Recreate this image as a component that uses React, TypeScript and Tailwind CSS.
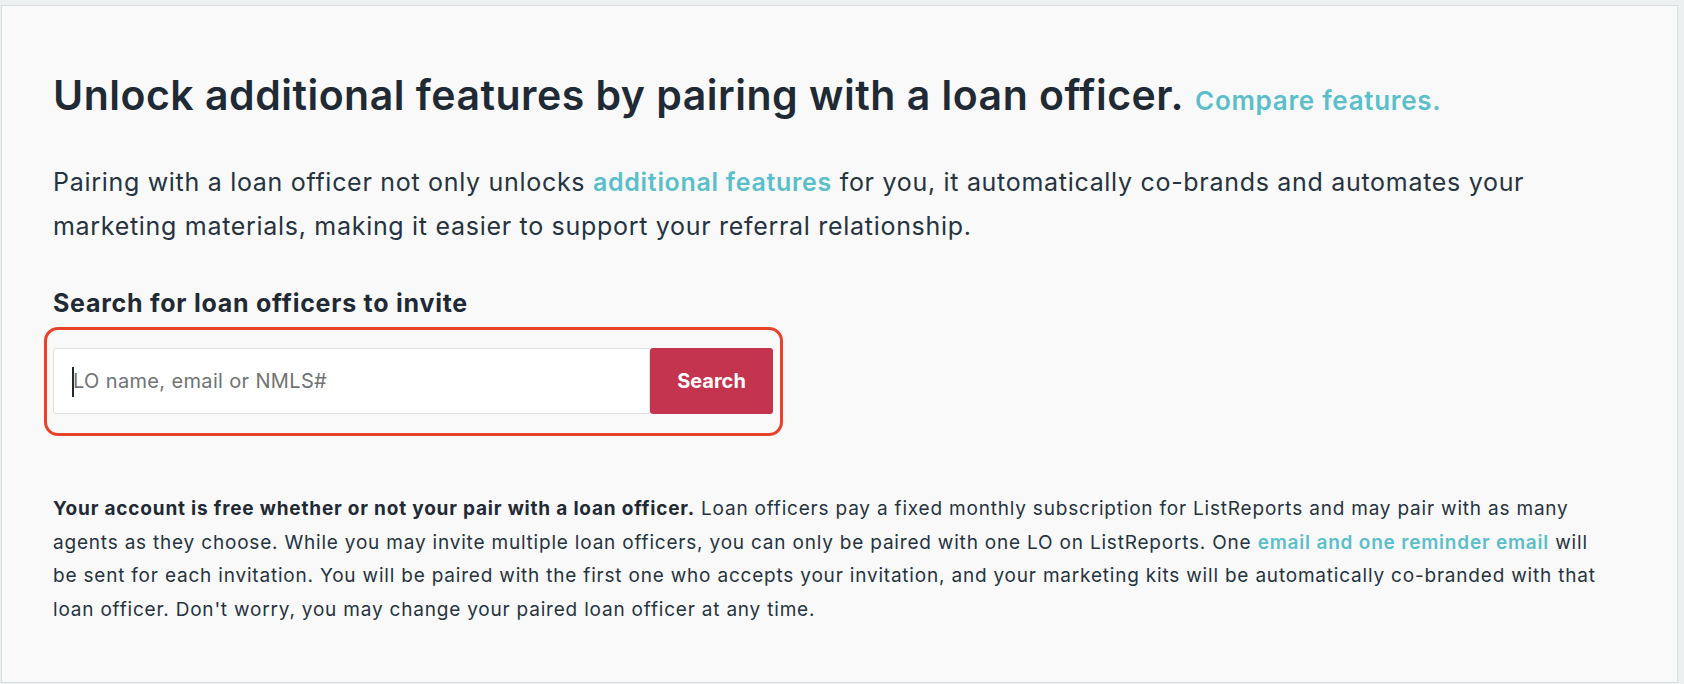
import React from "react";

const font = { fontFamily: "Inter, 'Noto Sans', sans-serif" };

const PairLoanOfficer: React.FC = () => (
  <div className="min-h-screen bg-[#edf0f1] pt-[5px]" style={font}>
    <section className="ml-px w-[1677px] min-h-[678px] border border-[#d8dde0] bg-[#f9f9f9] pl-[51px] pt-[65px] text-[#263340]">
      <h1 className="text-[41px] leading-[48px] font-semibold tracking-[0.5px] text-[#1f2a35] whitespace-nowrap">
        Unlock additional features by pairing with a loan officer.
        <a href="#" className="ml-[11px] text-[26px] font-semibold tracking-[0.7px] text-[#5bbfca]">
          Compare features.
        </a>
      </h1>

      <p className="mt-[35px] text-[25px] leading-[44px] tracking-[0.7px] whitespace-nowrap">
        Pairing with a loan officer not only unlocks{" "}
        <a href="#" className="font-semibold text-[#5bbfca]">additional features</a> for you, it
        automatically co-brands and automates your
        <br />
        marketing materials, making it easier to support your referral relationship.
      </p>

      <h2 className="mt-[40px] text-[25px] leading-[30px] font-bold tracking-[0.75px] text-[#1f2a35]">
        Search for loan officers to invite
      </h2>

      {/* search box, with the red highlight ring drawn round it */}
      <div className="relative mt-[30px] w-[720px]">
        <div className="pointer-events-none absolute -left-[9px] -right-[10px] -top-[21px] -bottom-[22px] rounded-[14px] border-[3px] border-[#e8432a]"></div>
        <div className="flex h-[66px]">
          <div className="relative flex-1 rounded-l-[3px] border border-[#dfe2e4] bg-white">
            <span className="absolute left-[18px] top-[18px] h-[30px] w-[2px] bg-[#1f2a35]"></span>
            <input
              className="h-full w-full bg-transparent pl-[19px] text-[20px] tracking-[0.35px] text-[#333] outline-none placeholder:text-[#6f7376]"
              placeholder="LO name, email or NMLS#"
            />
          </div>
          <button className="w-[123px] rounded-[3px] bg-[#c5344f] text-[20px] font-bold text-white">
            Search
          </button>
        </div>
      </div>

      <p className="mt-[78px] text-[19px] leading-[33.5px] tracking-[0.8px] whitespace-nowrap">
        <b className="font-bold text-[#1f2a35]">Your account is free whether or not your pair with a loan officer.</b>{" "}
        Loan officers pay a fixed monthly subscription for ListReports and may pair with as many
        <br />
        agents as they choose. While you may invite multiple loan officers, you can only be paired with one LO on
        ListReports. One <a href="#" className="font-semibold text-[#5bbfca]">email and one reminder email</a> will
        <br />
        be sent for each invitation. You will be paired with the first one who accepts your invitation, and your
        marketing kits will be automatically co-branded with that
        <br />
        loan officer. Don't worry, you may change your paired loan officer at any time.
      </p>
    </section>
  </div>
);

export default function App() {
  return <PairLoanOfficer />;
}
